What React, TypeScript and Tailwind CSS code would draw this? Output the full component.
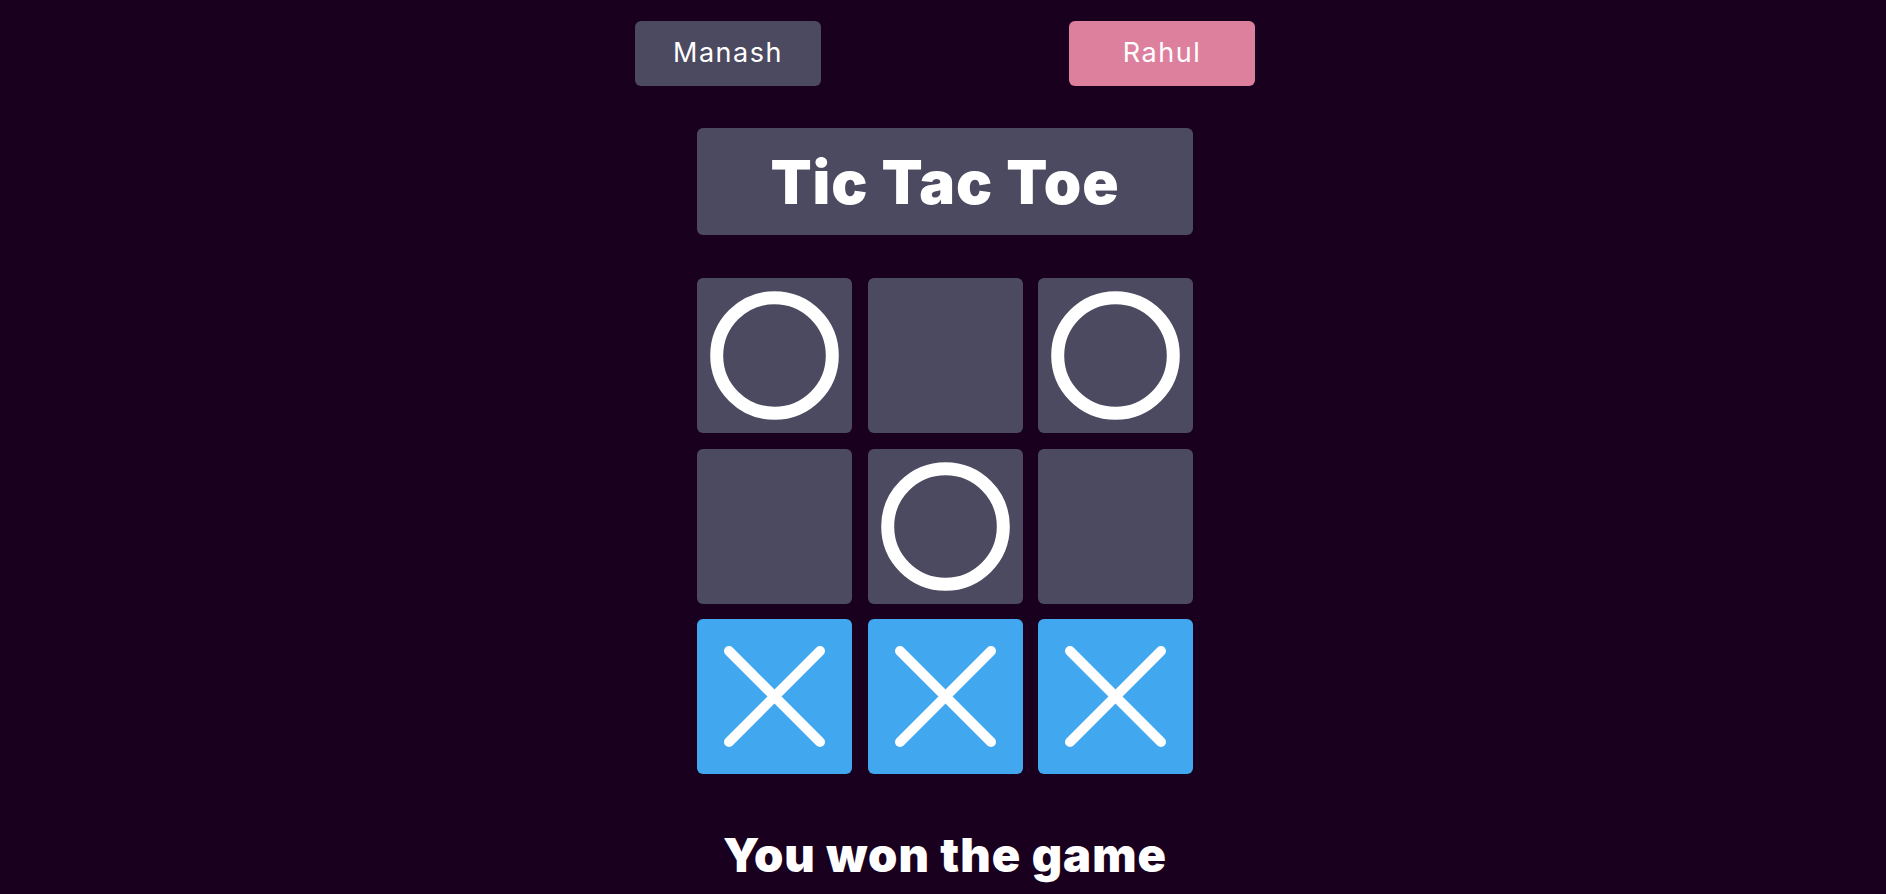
import React from "react";

type Mark = "X" | "O" | "";

const board: Mark[] = ["O", "", "O", "", "O", "", "X", "X", "X"];
const winning = [6, 7, 8];

function OMark() {
  return (
    <svg width="155" height="155" viewBox="0 0 155 155" className="block">
      <circle cx="77.5" cy="77.5" r="57.8" fill="none" stroke="#ffffff" strokeWidth="13" />
    </svg>
  );
}

function XMark() {
  return (
    <svg width="155" height="155" viewBox="0 0 155 155" className="block">
      <line x1="32" y1="32" x2="123" y2="123" stroke="#ffffff" strokeWidth="10" strokeLinecap="round" />
      <line x1="123" y1="32" x2="32" y2="123" stroke="#ffffff" strokeWidth="10" strokeLinecap="round" />
    </svg>
  );
}

export default function App() {
  return (
    <div className="min-h-screen w-full bg-[#1a001f] font-['Inter',sans-serif] text-white flex flex-col items-center pl-[4px] overflow-hidden">
      <div className="mt-[21px] w-[620px] flex justify-between">
        <div className="w-[186px] h-[65px] rounded-[6px] bg-[#4c4a60] flex items-center justify-center pb-[3px] text-[27px] leading-none tracking-[1.5px]">
          Manash
        </div>
        <div className="w-[186px] h-[65px] rounded-[6px] bg-[#dd809e] flex items-center justify-center pb-[3px] text-[27px] leading-none tracking-[1.5px]">
          Rahul
        </div>
      </div>

      <div className="mt-[42px] w-[496px] h-[107px] rounded-[6px] bg-[#4c4a60] flex items-center justify-center">
        <h1 className="text-[60px] font-black leading-none tracking-[1px]">Tic Tac Toe</h1>
      </div>

      <div className="mt-[43px] grid grid-cols-[repeat(3,155px)] gap-[15.5px]">
        {board.map((m, i) => (
          <div
            key={i}
            className={
              "w-[155px] h-[155px] rounded-[6px] " +
              (winning.includes(i) ? "bg-[#41a7ef]" : "bg-[#4c4a60]")
            }
          >
            {m === "O" ? <OMark /> : m === "X" ? <XMark /> : null}
          </div>
        ))}
      </div>

      <p className="mt-[57px] text-[47px] font-black leading-[47px] tracking-[1px] whitespace-nowrap">
        You won the game
      </p>
    </div>
  );
}
